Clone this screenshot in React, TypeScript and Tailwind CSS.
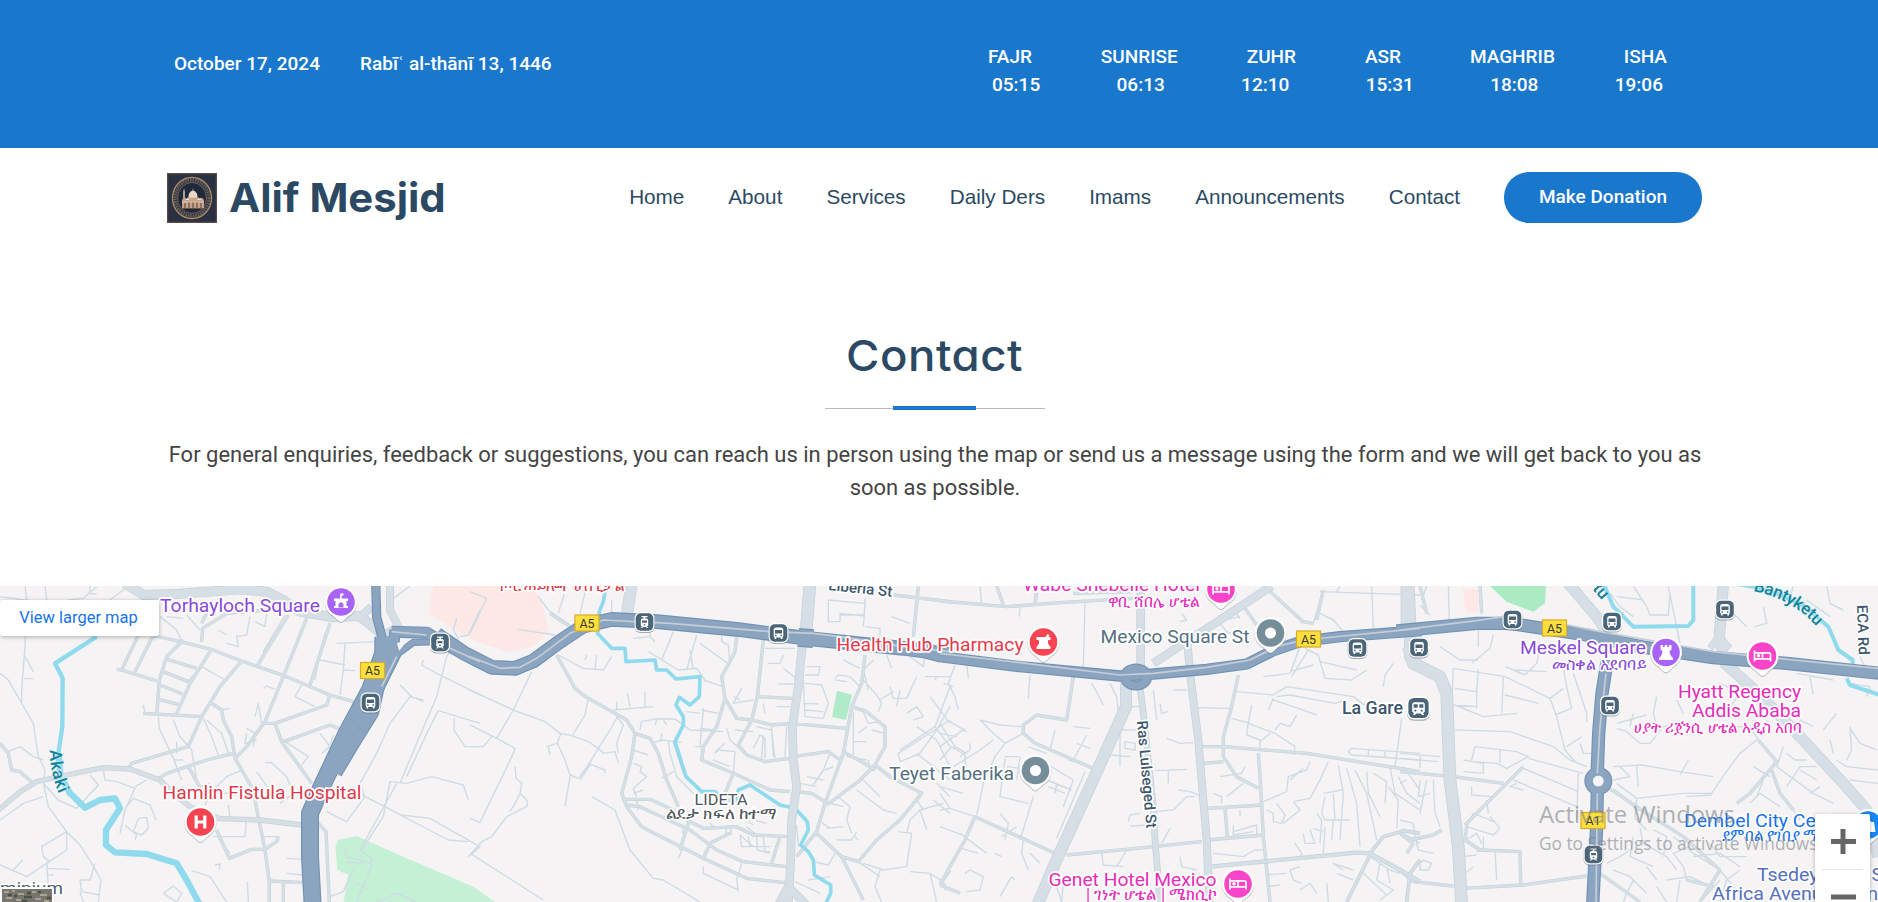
import React from "react";

const labels = ["FAJR", "SUNRISE", "ZUHR", "ASR", "MAGHRIB", "ISHA"];
const times = ["05:15", "06:13", "12:10", "15:31", "18:08", "19:06"];
const links = ["Home", "About", "Services", "Daily Ders", "Imams", "Announcements", "Contact"];

/* The map is split in four tiles, each drawn in units of a third of a pixel. */
type Tile = {
  x: number;
  minor: string;
  medium: string;
  major: [string, number][];
  river: [string, number][];
  highway: [string, number][];
  median: string;
};

const tiles: Tile[] = [
  {
    x: 0,
    minor:
      "M0,50 L110,65 L190,75 M75,18 L80,60 L75,200 L65,330 L65,370 M75,230 L100,275 M72,296 L100,296 M0,280 L25,300 L65,370 L100,430 L115,530 L135,570 L130,610 L145,680 L200,755 L240,795 L275,850 L303,900 L295,966 M130,610 L175,660 L230,685 L295,615 L270,585 M135,18 L140,60 M205,60 L250,55 L290,20 M330,60 L385,18 M270,18 L270,40 L290,42 M310,570 L315,600 L350,605 L405,625 L375,690 L360,760 M380,680 L400,655 L450,675 L468,720 M405,620 L440,600 M415,715 L440,712 L445,745 L425,765 L400,755 L415,715 M375,735 L410,765 L405,780 M25,515 L60,500 L100,530 L130,540 M0,720 L70,670 L130,650 M200,755 L125,800 L130,830 L150,845 M0,855 L80,890 L140,850 L200,810 L200,755 M140,845 L145,925 M140,865 L210,868 M145,885 L160,885 M40,870 L68,840 M240,900 L270,900 L285,850 M240,900 L245,935 L300,945 M240,935 L250,966 M475,410 L478,445 L520,535 L545,600 M520,420 L540,470 L575,510 L590,600 M610,415 L635,470 L655,525 M620,420 L665,460 L685,520 M530,485 L530,520 M520,540 L550,540 M430,375 L435,400 M605,260 L675,300 M605,258 L560,310 M665,390 L690,385 M740,445 L765,460 L760,500 M740,460 L735,490 L770,480 M765,410 L775,370 L785,430 M790,325 L800,318 L825,328 M885,350 L945,380 M905,315 L885,350 M840,475 L925,530 L905,555 M795,548 L815,548 L860,590 L880,640 L840,670 M770,575 L805,625 M615,675 L635,635 L680,590 L725,570 M600,620 L630,610 M640,640 L740,640 M685,675 L690,710 M640,770 L735,770 L740,715 M655,775 L690,820 M645,855 L660,852 L658,870 M790,770 L835,770 M860,835 L910,838 M860,880 L910,885 M742,905 L745,966 M575,872 L630,890 L680,966 M490,940 L520,918 L545,940 L530,966 L490,940 M810,190 L780,240 M855,105 L790,215 M710,165 L715,200 L680,190 M750,110 L740,165 L710,170 M765,125 L795,140 L800,100 M480,110 L530,150 L545,185 M560,105 L600,150 M500,110 L550,115 M655,150 L680,165 M960,240 L1035,255 M1035,190 L1030,270 L1020,345 M1030,270 L1065,272 M975,160 L955,240 L945,300 M1010,190 L1130,185 M960,460 L990,500 L965,520 M990,495 L1000,465 M1160,70 L1230,18 M1200,315 L1235,350 L1270,365 M1270,360 L1230,350 L1170,430 L1130,520 L1080,610 L1095,650 L1040,725 L980,695 M1340,230 L1310,350 L1250,490 L1200,610 M1270,240 L1265,255 L1310,280 L1440,345 M1340,230 L1375,175 L1360,150 L1370,115 M1380,170 L1405,165 L1440,90 M1315,392 L1290,440 L1220,590 M1315,392 L1440,430 M1363,415 L1362,450 L1395,500 L1440,500 M1170,605 L1220,610 L1295,590 L1390,615 L1405,660 M1190,610 L1080,810 M1085,645 L1165,685 L1230,720 L1345,780 L1405,785 M1205,705 L1290,715 L1440,800 L1405,830 M1170,605 L1150,710 L1085,810 M1035,805 L1040,830 L1115,850 M1080,810 L1115,835 L1115,855 L1070,966 M1035,848 L1090,848 M990,950 L1030,935 L1045,900 L1060,870 M1060,905 L1100,925 M1130,966 L1190,940 L1250,966",
    medium:
      "M455,165 L540,185 L630,207 L725,243 L860,290 L990,345 L1060,365 M865,105 L770,260 M990,130 L930,315 M920,115 L850,290 L795,425 L740,500 L708,532 M550,180 L500,230 L478,300 L470,405 M415,165 L365,270 L470,303 M460,165 L405,275 M350,268 L365,270 M498,237 L590,265 M490,275 L565,305 M480,315 L548,342 M476,358 L535,373 M635,207 L570,310 L530,400 M725,243 L660,320 L605,410 L565,500 L395,550 L385,565 M430,400 L605,410 M635,370 L665,390 L670,420 L695,470 L705,535 L760,630 L775,715 L785,760 L795,810 L808,905 L808,966 M470,600 L500,580 L620,540 L700,520 M790,430 L825,430 L980,375 L990,345 M825,430 L845,485 L935,610 M845,487 L990,435 L1015,445 M565,560 L610,640 M650,750 L688,835 L755,808 L795,808 L830,785 L835,768 M808,903 L912,908 M850,903 L850,966 M605,185 L608,145 L680,100 L800,90 M0,490 L25,520 L35,570 L60,575 L95,605 M955,730 L978,755 L988,966 M620,100 L605,130",
    major: [
      ["M375,10 L430,45 L530,42 L720,28 L800,35 L850,60 L900,95 L1000,112 L1080,108 L1150,165", 30],
      ["M1170,10 L1170,90 L1195,140 L1150,165 M1115,80 L1070,120", 24],
      ["M-10,695 L60,635 L110,605 L200,585 L310,563 L390,567 L480,600 L520,640 L570,680 L660,716 L780,720 L905,735", 16],
    ],
    river: [
      ["M290,170 L165,250 L188,295 L187,440 L175,520", 13],
      ["M175,520 L182,590 L210,640 L255,683 L300,660 L345,655 L360,685 L318,750 L318,795 L345,817 L440,822 L530,850 L560,900 L600,975", 19],
    ],
    highway: [
      ["M1127,0 L1130,110 L1148,180", 28],
      ["M1150,170 L1150,220 L1110,330 L1040,460 L965,620 L930,700 L930,830 L938,976", 54],
      ["M1185,150 L1180,215 L1140,310 L1120,400 L1070,480 L1010,580", 34],
      ["M1175,155 L1280,158 L1350,200 L1445,250", 36],
      ["M1080,440 L1140,330 L1195,220 L1240,187 L1310,185", 22],
    ],
    median: "M1350,205 L1440,245 M1175,155 L1280,165 M1145,320 L1190,230",
  },
  {
    x: 470,
    minor:
      "M0,35 L50,55 L0,160 M290,18 L265,100 M350,18 L330,100 M425,60 L425,100 M205,50 L235,90 L300,135 M145,148 L255,165 M265,225 L340,265 L400,270 L425,230 M380,225 L375,268 M350,225 L345,240 M185,275 L130,390 L80,475 M0,330 L130,390 L225,425 L270,460 L305,467 L355,485 L385,505 M0,435 L80,475 L135,505 L130,520 L30,728 L0,715 M0,500 L40,500 L65,470 M135,560 L138,595 L155,610 L150,640 L170,660 L172,678 L140,695 L110,710 L65,770 L35,785 L0,825 M150,640 L130,680 L118,695 M355,355 L345,405 L308,465 M445,405 L420,450 L385,505 L355,555 L325,595 L300,585 L285,540 L262,490 L272,462 M300,590 L285,680 M230,500 L262,490 M235,500 L240,525 M355,550 L405,570 L405,580 M385,505 L400,520 L435,515 L445,550 M440,410 L460,435 L440,490 L445,520 M0,820 L220,960 M365,650 L435,690 L480,810 L550,895 L580,900 L690,966 M430,390 L550,380 M525,335 L525,380 M472,340 L480,380 M440,365 L440,390 M510,450 L515,425 L555,417 L615,417 L660,450 L760,455 M560,420 L555,435 M580,420 L590,435 M545,490 L575,480 L635,487 M595,485 L600,520 L620,590 L680,650 M610,487 L640,580 M575,460 L573,485 M490,510 L535,525 M490,550 L515,560 L510,575 L530,590 L490,625 L500,650 M575,595 L610,575 M680,165 L650,270 M610,155 L575,240 M535,215 L625,270 L680,265 L705,300 M670,270 L660,210 M755,170 L755,185 L775,195 L780,250 M690,190 L780,255 M695,390 L745,400 M700,385 L690,500 M690,445 L735,450 M650,395 L690,400 M675,500 L700,500 M700,300 L760,320 M815,325 L790,370 L850,360 M790,350 L810,360 M885,205 L975,205 M895,250 L930,250 L940,225 M925,312 L970,312 M940,265 L985,300 M920,380 L960,380 M860,440 L905,450 L915,540 M905,440 L910,530 M880,465 L875,535 M850,505 L870,465 L885,475 L885,535 M950,440 L945,530 M795,450 L850,455 M770,445 L780,480 L835,530 M735,520 L745,510 L795,515 M795,515 L790,580 M730,540 L780,560 M765,490 L735,515 M880,370 L885,400 M1010,260 L1050,260 L1045,285 L1005,285 M1005,310 L1055,315 L1075,370 L1060,415 L1005,410 M1005,370 L1045,372 M1005,390 L1060,395 M1000,300 L1005,410 M1095,295 L1105,285 L1140,290 L1170,320 M1095,300 L1130,305 M1120,240 L1170,265 M1075,60 L1185,70 L1180,140 M1075,60 L1075,125 L1110,125 L1110,100 L1185,108 M1110,105 L1185,105 M1185,55 L1185,85 M1230,180 L1230,145 L1185,140 M1265,110 L1320,130 M1180,300 L1220,345 L1235,370 L1225,395 M1195,330 L1180,270 L1210,240 M1260,320 L1270,355 L1310,355 L1340,290 M1250,225 L1265,265 M1320,230 L1360,260 L1365,215 M1365,290 L1440,290 M1400,290 L1395,300 M1270,335 L1230,360 M1290,330 L1280,380 M1310,400 L1340,380 L1360,410 L1330,420 M1440,380 L1400,450 L1350,520 L1290,545 M1380,350 L1440,430 M1440,320 L1395,440 L1440,500 M1340,440 L1400,480 M1290,510 L1350,470 L1395,440 M1290,545 L1285,520 L1440,420 M1340,520 L1440,600 M1400,480 L1440,560 M1150,395 L1150,525 M1150,485 L1190,485 M1180,395 L1195,430 L1230,425 M1245,460 L1205,450 M1165,460 L1190,440 M1195,540 L1200,570 L1165,610 M1130,530 L1190,540 M1065,570 L1090,560 M1010,590 L1060,600 M1030,615 L1060,570 L1080,520 M990,610 L1040,620 M1105,650 L1140,680 L1130,720 L1145,760 M1080,670 L1120,680 M1160,630 L1200,660 L1240,690 L1280,700 M1180,600 L1230,650 M1100,780 L1145,780 L1160,755 M1155,770 L1165,780 M1045,720 L1080,745 M1070,745 L1120,740 M1030,845 L1075,855 L1095,820 M1015,900 L1080,890 M1180,850 L1240,870 L1310,860 L1325,760 L1285,755 M1230,870 L1215,920 L1235,966 M1150,835 L1230,890 M1310,760 L1320,720 L1350,690 L1420,670 M1350,690 L1370,750 M1360,690 L1340,660 M1390,660 L1440,700 M1400,610 L1440,650 M1320,875 L1380,880 L1420,905 M1380,880 L1400,966 M970,940 L1005,966 M975,905 L1050,940 M810,765 L850,800 L870,800 L900,800 M810,765 L815,800 L850,798 M830,740 L860,765 M850,735 L835,725 M835,770 L840,800 L830,800 M860,770 L862,810 L900,820 M880,770 L885,815 L900,815 M780,740 L785,765 M700,860 L700,880 L805,930 M815,850 L800,900 L805,935 M640,800 L625,835 M720,730 L735,745 M770,745 L765,770 M980,735 L985,800 M850,720 L890,730 M540,150 L540,170 L490,175 M540,170 L555,185 M330,600 L360,555 M490,640 L520,630 M500,660 L505,690",
    medium:
      "M240,100 L300,140 M260,225 L315,325 L350,352 L470,420 L495,460 L485,530 L455,640 L470,680 L515,740 L700,835 L830,895 L945,908 M495,460 L540,475 L565,520 L590,600 L625,680 M460,658 L540,658 L610,690 L650,720 L700,745 L800,740 L850,765 L955,770 M470,675 L510,680 L660,750 L740,810 L820,845 L950,860 M650,745 L630,810 M660,725 L640,760 M700,835 L720,790 L780,760 M930,770 L905,850 M800,170 L795,215 L755,290 L765,355 L740,440 L700,500 L695,540 L790,580 L900,630 L960,635 M765,355 L800,415 L845,420 L905,435 L975,430 M880,180 L862,350 L845,420 L805,495 L830,525 L885,545 L960,535 M862,350 L965,355 M790,580 L765,640 M965,430 L1130,445 M970,530 L1075,515 L1110,540 M980,635 L1025,640 L1065,665 M1185,225 L1175,310 L1145,380 L1120,520 L1065,670 L1040,755 L980,830 M1145,380 L1190,395 L1245,440 L1245,500 L1215,555 L1165,605 L1070,675 M1120,515 L1175,545 L1215,570 M1215,555 L1260,590 L1355,640 L1290,720 L1220,780 L1165,845 L1115,830 L1040,760 M1115,830 L1180,960 M1345,20 L1330,170 M1270,45 L1440,65 M1415,905 L1440,870 M1415,905 L1430,930",
    major: [
      ["M485,10 L470,110", 36],
      ["M1020,10 L1008,160", 38],
      ["M1000,160 L985,320 L967,440 L970,540 L980,620 L965,720 L962,840 L955,975", 26],
      ["M955,920 L925,976 M955,920 L1010,976", 26],
    ],
    river: [
      ["M410,10 L400,65 L388,95 L382,160 L425,205 L465,205 L468,245 L555,240 L560,270 L590,270 L618,297 L690,290 L688,350 L660,375 L628,352 L618,375 L640,410 L640,435 L615,485 L648,590 L695,635 L735,635 L760,660 L800,660 L805,630 L840,615 L930,675 L975,685 L1012,725 L1015,750 L992,795 L1015,815 L1030,840 L1033,885 L1082,915 L1082,940 L1065,975", 11],
    ],
    highway: [["M-100,163 L-20,218 L65,262 L135,265 L190,243 L265,188 L340,138 L425,118 L560,125 L800,148 L1010,175 L1300,205 L1450,225", 44], ["M985,172 L1030,176", 56]],
    median: "M0,230 L90,265 L150,262 L200,235 L300,160 L400,120 L600,130 L900,155 L1030,160 L1110,170 L1300,200 L1440,215",
  },
  {
    x: 940,
    minor:
      "M120,18 L125,75 M240,85 L238,110 M435,70 L430,260 M510,310 L530,350 L535,400 M455,310 L475,345 L490,375 M270,285 L265,355 M80,250 L85,295 M45,255 L25,310 L45,350 L55,390 M10,310 L40,320 M0,430 L45,500 L80,520 M0,500 L75,445 M30,425 L80,455 M0,460 L50,470 M0,540 L35,500 L75,525 L80,600 M40,560 L120,510 L160,480 M60,530 L90,510 L90,490 M120,420 L180,435 L245,440 M120,420 L160,460 L195,490 L250,460 M195,490 L165,530 L130,610 L110,705 M195,530 L235,530 M345,450 L330,510 M440,465 L400,540 M410,490 L450,505 M195,535 L180,650 L265,670 M200,560 L240,565 M240,530 L230,600 M280,650 L240,780 M265,500 L320,520 M310,545 L400,600 M320,600 L395,630 M325,620 L375,640 M350,610 L345,640 M435,575 L350,775 M400,600 L370,680 M0,620 L70,640 M0,690 L30,685 L105,710 M30,685 L0,640 M60,760 L140,820 M0,740 L80,770 M65,805 L115,820 M180,700 L205,730 L195,780 M185,770 L230,740 M250,780 L245,820 L265,870 M165,820 L185,830 M75,880 L90,870 L130,890 L120,930 L80,935 M180,950 L215,890 L225,900 M270,820 L300,850 M545,450 L590,450 M540,450 L540,560 M555,485 L585,490 L585,510 L555,505 L555,485 M510,525 L570,530 M575,380 L610,380 M660,370 L665,400 L685,395 M640,330 L650,420 M700,330 L740,330 M645,572 L740,568 M685,570 L685,610 M680,475 L720,490 L760,488 M770,383 L870,385 M640,695 L700,690 L740,650 L765,650 M565,725 L570,705 L600,700 M570,738 L625,735 M715,630 L750,635 L790,650 M690,745 L665,790 M485,820 L490,855 L550,860 M530,860 L560,810 M720,830 L725,860 L770,870 M400,440 L450,445 M385,540 L435,550 M880,90 L900,115 M830,125 L900,110 M725,100 L740,120 L720,125 M840,130 L860,155 L880,165 M1095,205 L1135,225 L1155,295 L1235,300 L1280,270 M1140,245 L1250,270 M1080,200 L1050,280 L970,290 M1105,210 L1055,290 M1120,255 L1050,275 M985,30 L1090,130 M1150,30 L1120,130 M1140,35 L1440,45 M1295,18 L1300,145 M1140,100 L1180,120 L1210,155 M1200,18 L1190,35 M890,335 L1000,345 L1040,320 L1240,350 L1280,380 M1010,350 L1050,345 L1185,370 L1215,360 M1000,360 L1060,380 L1130,405 M1000,355 L985,390 M935,375 L925,430 L1005,460 L1065,500 M925,425 L920,465 L960,480 L960,510 M875,415 L930,430 M1005,450 L1020,430 L1050,440 L1070,405 M1065,500 L1062,525 M960,485 L990,460 M1385,415 L1365,560 M1225,515 L1235,505 L1440,520 M1225,515 L1235,525 L1440,540 M1285,510 L1285,525 M1335,515 L1335,530 M840,590 L905,580 L915,560 M860,650 L910,610 M1110,545 L1100,570 L1045,590 L1040,635 L970,665 M1090,565 L1050,600 M1165,545 L1140,600 L1110,655 L1060,665 M1195,555 L1210,640 L1200,780 M1220,565 L1250,670 L1260,800 M1245,570 L1280,640 L1310,780 M1280,575 L1285,640 L1320,710 M1300,580 L1340,605 L1335,670 M1150,640 L1205,630 M1155,650 L1145,700 L1155,720 L1230,720 M1180,640 L1185,720 M980,690 L1000,700 L1000,725 L1025,730 L1035,705 L1010,670 M1060,665 L1080,690 L1030,730 M880,735 L880,765 L940,755 M880,755 L950,735 L950,765 M900,690 L900,710 M820,820 L910,830 L945,810 L975,810 M1065,790 L1085,820 L1080,835 M1090,760 L1095,790 L1125,790 L1110,750 M1120,745 L1150,755 M1130,700 L1145,720 L1140,790 M1155,740 L1150,820 M1345,620 L1375,660 L1370,745 M1375,590 L1400,640 L1440,670 M1350,560 L1365,640 L1440,690 M1180,720 L1175,780 M1240,870 L1180,850 L1210,870 M1190,880 L1240,900 M1160,910 L1165,966 M1080,930 L1110,910 L1130,940 M1080,860 L1050,870 L1060,900 L1085,910 M975,885 L1040,880 M980,920 L1020,915 M1290,830 L1350,870 L1380,880 M1320,850 L1310,900 L1360,930 L1320,960 M1340,860 L1350,910 M1270,880 L1340,945 M1390,760 L1440,790 M1390,560 L1440,630 M820,640 L845,650 L845,670 M345,905 L365,966 M370,900 L365,966 M1330,320 L1335,285 L1360,250",
    medium:
      "M0,63 L200,80 L360,68 L580,55 M170,18 L190,75 M290,40 L285,75 M400,290 L380,420 L290,405 L250,435 L250,460 L285,490 L455,563 M0,915 L35,850 L75,780 L105,710 L345,820 M0,915 L60,940 M380,825 L560,808 L785,785 M895,285 L875,380 L850,470 L850,530 L890,590 L955,625 M785,500 L850,500 L1100,520 L1440,575 M790,550 L850,545 M955,520 L962,620 L970,770 L990,966 M800,685 L970,675 M805,780 L970,765 M855,685 L862,770 M915,85 L950,135 M985,30 L1090,125 L1120,130 M1150,30 L1130,120 M580,35 L400,40 M290,18 L285,70",
    major: [
      ["M602,20 L602,260", 26],
      ["M995,18 L840,120 L640,250", 26],
      ["M740,160 L750,280 L775,480 L800,780 L808,966", 24],
      ["M600,320 L610,400 L640,680 L645,780 L660,966", 20],
      ["M558,310 L558,380 L450,620 L345,850 L290,980", 36],
      ["M1400,18 L1400,135 M1410,170 L1410,230 L1440,260", 36],
      ["M810,860 L1250,818 L1290,820 L1380,870 L1440,905", 13],
      ["M1290,820 L1330,770 L1390,752 L1440,760 M1290,825 L1220,966 M1440,840 L1410,880 L1400,966", 11],
    ],
    river: [],
    highway: [["M-40,220 L0,230 L240,260 L540,288 L640,282 L800,268 L920,252 L1000,212 L1080,185 L1200,170 L1445,152", 34], ["M554,291 A34,26 0 1 0 622,291 A34,26 0 1 0 554,291", 29]],
    median: "M0,220 L200,243 L540,285 L640,280 L800,262 L930,240 L1010,200 L1090,180 L1440,145",
  },
  {
    x: 1400,
    minor:
      "M145,18 L148,125 M65,60 L80,18 M60,75 L90,105 M235,150 L235,200 M215,250 L270,205 L280,165 M120,200 L180,240 L235,240 M160,265 L315,290 L450,355 L490,325 M160,265 L155,375 L230,380 M165,325 L230,335 L235,270 M230,335 L230,385 M310,290 L305,400 M315,260 L375,285 L410,250 L420,200 M345,270 L440,275 M315,345 L415,370 M450,355 L470,410 L495,510 L530,550 M490,265 L500,320 L515,385 L465,405 M520,280 L560,400 L560,425 M165,450 L330,455 L460,500 L510,540 L560,560 M165,375 L250,410 L350,400 M0,520 L120,530 M0,535 L115,545 M60,525 L60,565 M190,540 L250,550 L250,580 L190,575 M225,500 L350,515 L385,530 L320,565 L290,550 L220,545 M225,500 L215,540 M300,510 L300,550 M385,535 L550,580 M370,565 L535,635 M340,600 L530,680 M350,610 L330,620 L370,630 M535,580 L530,720 M215,620 L215,645 L280,650 M260,660 L265,700 M200,740 L220,700 L280,725 M200,740 L280,765 L300,745 L270,710 M540,490 L550,520 L575,520 M500,500 L545,470 M190,785 L230,760 L245,790 M185,830 L230,825 M190,885 L220,860 M230,815 L250,810 L250,770 M285,810 L290,900 M620,850 L660,830 L690,810 M60,850 L70,840 L95,850 L85,870 L60,870 L60,850 M45,770 L55,810 L100,820 M0,720 L40,730 L45,770 M0,610 L20,600 M60,600 L55,650 L90,640 M80,600 L60,700 M100,600 L105,700 L120,740 M630,40 L660,80 L700,110 M700,18 L740,80 L750,105 L805,105 L810,40 M650,50 L730,60 M805,20 L840,190 M650,430 L740,405 M650,445 L680,455 L720,490 L750,490 L790,440 L860,430 M770,350 L760,400 L770,440 M700,400 L690,440 M830,360 L850,400 M640,560 L725,555 L840,575 L940,590 M840,585 L865,540 M710,560 L715,620 M660,560 L690,590 L640,600 M650,610 L710,655 L850,640 L935,640 M710,655 L705,715 L740,750 M860,650 L935,645 M935,640 L975,580 L1020,520 L1070,480 M1130,560 L1240,640 L1300,670 M1010,440 L1050,440 L1075,480 M960,310 L1030,345 L1040,310 M970,405 L1030,330 M1185,480 L1200,420 L1240,440 M1350,440 L1355,510 L1340,540 M1350,445 L1380,490 L1430,510 M1270,450 L1310,400 M1230,290 L1240,345 M1350,310 L1410,320 L1400,350 M1380,230 L1395,260 M1090,80 L1100,130 L1065,140 M1000,100 L1040,140 M1180,18 L1170,50 M1280,18 L1290,70 L1330,90 M1220,60 L1290,110 M1190,280 L1300,300 M1250,560 L1200,560 L1160,620 M1130,560 L1150,500 M1200,570 L1250,600 M1160,520 L1185,540 L1220,540 M1230,640 L1260,620 M1310,540 L1340,560 L1434,570 M1350,600 L1434,610 M1290,480 L1300,520 M860,900 L850,860 L820,820 L870,800 M700,770 L690,830 L760,860 M720,745 L730,790 L800,830 L830,870 M760,750 L800,770 L790,830 M820,770 L880,820 L960,870 L1000,920 L1040,966 M640,870 L690,890 L740,940 M700,900 L680,940 L670,966 M740,860 L770,900 M800,900 L870,890 L930,920 M770,920 L800,966 M840,900 L830,966 M880,830 L960,820 L1020,860 M930,790 L960,830 L1040,830 M960,900 L900,966 M1020,870 L980,900 L960,966 M1050,670 L1080,640 L1140,680 M1090,600 L1070,650 M1110,700 L1150,720 M1160,660 L1200,720 M1110,590 L1060,560",
    medium:
      "M0,575 L160,590 L310,610 M370,560 L195,735 M0,760 L40,790 M0,870 L40,905 L160,918 M190,925 L370,915 L560,888 M40,790 L20,820 M0,755 L30,780 L100,765 L125,750 M200,740 L195,780 L240,810 L360,815 L362,910 M620,620 L740,700 L850,770 L960,870 M640,630 L720,690 M600,880 L670,930 L720,966 M960,870 L900,966 M860,900 L940,920 M1075,480 L1130,545 L1050,640 L1010,670 M1115,570 L1140,640 L1180,690 M240,18 L245,100 M60,18 L80,100",
    major: [
      ["M25,18 L30,135 M25,200 L40,250 L120,290 L140,340 L150,600 L175,800 L185,976", 38],
      ["M505,10 L590,110 L625,160", 34],
      ["M970,10 L958,170 L975,250 L1080,345 L1200,470 L1330,610 L1400,690 L1434,830", 34],
      ["M955,170 L930,205 M955,170 L990,205", 20],
    ],
    river: [
      ["M610,10 L640,80 L700,140 L865,138 L880,120 L880,10", 12],
      ["M1000,10 L1060,20 L1130,40 L1215,80 L1285,140 L1315,210 L1358,240 L1358,255 M1340,295 L1350,315 L1440,345", 12],
    ],
    highway: [["M-10,153 L0,152 L230,130 L330,130 L560,165 L740,203 L940,233 L1160,250 L1440,280", 40], ["M622,240 L606,340 L596,460 L592,570 M592,630 L590,740 L578,976", 40], ["M567,603 A28,28 0 1 0 623,603 A28,28 0 1 0 567,603", 28]],
    median: "M0,150 L230,122 L310,110 M430,120 L600,155 L800,190 L940,215 L1180,240 L1434,265 M618,280 L600,440 L592,580 M592,640 L588,966",
  },
];

const Layer = ({ children }: { children: (t: Tile) => React.ReactNode }) => (
  <>
    {tiles.map((t) => (
      <g key={t.x} transform={`translate(${t.x} 580) scale(0.33333)`}>
        {children(t)}
      </g>
    ))}
  </>
);

type LabelProps = { x: number; y: number; w: number; s?: number; c: string; t: string; bold?: boolean; rot?: number };
const Label = ({ x, y, w, s = 19, c, t, bold, rot }: LabelProps) => (
  <text
    x={x}
    y={y}
    fontSize={s}
    textLength={w}
    lengthAdjust="spacingAndGlyphs"
    fill={c}
    stroke="#ffffff"
    strokeWidth={3.4}
    strokeLinejoin="round"
    paintOrder="stroke"
    fontWeight={bold ? 500 : 400}
    transform={rot ? `rotate(${rot} ${x} ${y})` : undefined}
  >
    {t}
  </text>
);

const Pin = ({ x, y, c, children }: { x: number; y: number; c: string; children?: React.ReactNode }) => (
  <g transform={`translate(${x} ${y})`}>
    <path d="M0,20 C-3,20 -4,16 -10,12.500 A16,16 0 1 1 10,12.500 C4,16 3,20 0,20Z" transform="translate(0 1)" fill="#64707a" opacity=".45" />
    <path d="M0,20 C-3,20 -4,16 -10,12.500 A16,16 0 1 1 10,12.500 C4,16 3,20 0,20Z" fill="#fff" />
    <circle r="13.800" fill={c} />
    {children}
  </g>
);

const Bed = () => (
  <g>
    <path d="M-8,-5.500 V5.500 M-8,2.800 H8 M8,5.500 V-1.500 Q8,-3.200 6.300,-3.200 H0 V2.800 M-8,-3.200 H0" fill="none" stroke="#fff" strokeWidth="1.700" />
    <circle cx="-4" cy="-.2" r="1.700" fill="#fff" />
  </g>
);

const Transit = ({ x, y, tram, wide }: { x: number; y: number; tram?: boolean; wide?: boolean }) => (
  <g transform={`translate(${x} ${y})`}>
    <rect x="-10" y="-9.500" width="20" height="20.500" rx="6" fill="#56646f" opacity=".5" />
    <rect x="-10" y="-10" width="20" height="20" rx="6" fill="#fff" />
    <rect x="-8.800" y="-8.800" width="17.600" height="17.600" rx="5" fill="#4a6478" />
    {tram ? (
      <path fillRule="evenodd" d="M-3,-6 H3 V-4.700 H.8 V-3.400 H2 Q3.700,-3.400 3.700,-1.800 V3.500 L2.500,4.500 L4,6 H2.500 L1.500,5 H-1.500 L-2.500,6 H-4 L-2.500,4.500 L-3.700,3.500 V-1.800 Q-3.700,-3.400 -2,-3.400 H-.8 V-4.700 H-3Z M-2.400,-1.500 V.8 H2.400 V-1.500Z M-.8,2.200 h1.600 v1.400 h-1.600z" fill="#fff" />
    ) : (
      <path fillRule="evenodd" d={wide ? "M-5.500,-3 Q-5.500,-5 -3.500,-5 H3.500 Q5.500,-5 5.500,-3 V3 L4,4.500 L5,6 H3 L2,4.800 H-2 L-3,6 H-5 L-4,4.500 L-5.500,3Z M-4.200,-3.300 V-.3 H-.7 V-3.300Z M.7,-3.300 V-.3 H4.200 V-3.300Z M-3.600,1.600 h1.700 v1.500 h-1.700z M1.900,1.600 h1.700 v1.500 h-1.700z" : "M-4.800,-3.500 Q-4.800,-5.500 -2.500,-5.500 H2.500 Q4.800,-5.500 4.800,-3.500 V3.500 L4,4.500 V6 H2.300 V4.500 H-2.300 V6 H-4 V4.500 L-4.800,3.500Z M-3.500,-3 V.4 H3.500 V-3Z M-3.400,1.800 h1.500 v1.400 h-1.500z M1.900,1.800 h1.500 v1.400 h-1.500z"} fill="#fff" />
    )}
  </g>
);

const Shield = ({ x, y, t }: { x: number; y: number; t: string }) => (
  <g>
    <rect x={x - 12} y={y - 8} width="24" height="16" fill="#ffdf3c" stroke="#d9ab2b" strokeWidth="1.200" />
    <text x={x} y={y + 4.500} fontSize="12.800" fontWeight="400" textAnchor="middle" fill="#33373a" textLength="15" lengthAdjust="spacingAndGlyphs">{t}</text>
  </g>
);

const CityMap = () => (
  <svg viewBox="0 586 1878 316" className="block h-[316px] w-full bg-[#f5f3f4] font-['Roboto','Noto_Sans',sans-serif]">
    <g transform="translate(0 580) scale(.33333)">
      <path d="M1300,18 L1285,100 L1350,140 L1440,190 L1530,216 L1600,200 L1645,155 L1630,80 L1600,18Z" fill="#fde8e6" />
      <path d="M1015,780 L1070,768 L1220,835 L1420,920 L1490,970 L1030,970 L1045,885 L1012,870 L1006,800Z" fill="#c4f0d6" />
      <path d="M2511,332 L2556,344 L2538,420 L2496,411Z" fill="#aeebc6" />
      <path d="M4470,18 L4520,65 L4600,95 L4635,70 L4638,18Z" fill="#aaebc3" />
      <path d="M4388,25 L4435,30 L4435,95 L4398,95Z" fill="#fde8e6" />
    </g>
    <Layer>{(t) => <path d={t.minor} fill="none" stroke="#cfdbe4" strokeWidth="4.200" strokeLinejoin="round" />}</Layer>
    <Layer>{(t) => <path d={t.medium} fill="none" stroke="#c3cfd7" strokeWidth="10" strokeLinejoin="round" />}</Layer>
    <Layer>{(t) => <path d={t.medium} fill="none" stroke="#d5dfe6" strokeWidth="7.500" strokeLinejoin="round" />}</Layer>
    <Layer>{(t) => t.river.map(([d, w]) => <path key={d} d={d} fill="none" stroke="#8fdaed" strokeWidth={w} strokeLinejoin="round" />)}</Layer>
    <Layer>{(t) => t.major.map(([d, w]) => <path key={d} d={d} fill="none" stroke="#c5d0d8" strokeWidth={w} strokeLinejoin="round" />)}</Layer>
    <Layer>{(t) => t.major.map(([d, w]) => <path key={d} d={d} fill="none" stroke="#d6dfe6" strokeWidth={w - 4} strokeLinejoin="round" />)}</Layer>
    <Layer>{(t) => t.highway.map(([d, w]) => <path key={d} d={d} fill="none" stroke="#7292b4" strokeWidth={w} strokeLinejoin="round" />)}</Layer>
    <Layer>{(t) => t.highway.map(([d, w]) => <path key={d} d={d} fill="none" stroke="#8ba5c1" strokeWidth={w - 7} strokeLinejoin="round" />)}</Layer>
    <Layer>{(t) => <path d={t.median} fill="none" stroke="#c6cdd7" strokeWidth="5" strokeLinejoin="round" />}</Layer>
    <path d="M397,643 L408,640 L399,651Z" fill="#f5f3f4" />
    <circle cx="1598.300" cy="781" r="5.500" fill="#f5f3f4" />

    <Shield x={372.500} y={670.500} t="A5" />
    <Shield x={587} y={623} t="A5" />
    <Shield x={1308.500} y={639} t="A5" />
    <Shield x={1554.500} y={628} t="A5" />
    <Shield x={1593} y={820.500} t="A1" />

    <Transit x={440} y={642.500} tram />
    <Transit x={370.500} y={702.500} />
    <Transit x={644.500} y={622} tram />
    <Transit x={778.500} y={633} />
    <Transit x={1357.500} y={648} />
    <Transit x={1419} y={647.500} />
    <Transit x={1512.500} y={619.500} />
    <Transit x={1612} y={621.500} />
    <Transit x={1725} y={609.500} />
    <Transit x={1610} y={705.500} />
    <Transit x={1593.500} y={854.500} tram />
    <g transform="translate(1418.500 708) scale(1.150)"><Transit x={0} y={0} wide /></g>

    <Label x={160} y={611.500} w={160} c="#8a49d8" t="Torhayloch Square" />
    <Label x={162.500} y={798.500} w={199} c="#dc3a4a" t="Hamlin Fistula Hospital" />
    <Label x={500} y={591} w={125} s={17} c="#dc3a4a" t="ጦር ሐይሎች ሆስፒታል" />
    <Label x={828} y={590} w={64} s={15} c="#3f586d" t="Liberia St" bold rot={6} />
    <Label x={836.500} y={651} w={187} c="#e63a4b" t="Health Hub Pharmacy" />
    <Label x={1023} y={591} w={177} c="#e62bb9" t="Wabe Shebelle Hotel" />
    <Label x={1108} y={606.500} w={92} s={17} c="#e62bb9" t="ዋቢ ሸበሌ ሆቴል" />
    <Label x={1100.500} y={642.500} w={149} c="#55707f" t="Mexico Square St" />
    <Label x={889} y={780} w={125} c="#55707f" t="Teyet Faberika" />
    <Label x={1342} y={713.500} w={61} s={17.500} c="#3d566b" t="La Gare" bold />
    <Label x={694.500} y={805} w={53} s={14} c="#50565c" t="LIDETA" />
    <Label x={665.500} y={818.500} w={111} s={16} c="#50565c" t="ልደታ ክፍለ ከተማ" bold />
    <Label x={1137} y={721} w={108} s={15} c="#3f586d" t="Ras Lulseged St" bold rot={85} />
    <Label x={1048.500} y={885.500} w={168} c="#e62bb9" t="Genet Hotel Mexico" />
    <Label x={1086} y={900} w={131} s={17} c="#e62bb9" t="| ገነት ሆቴል | ሜክሲኮ" />
    <Label x={1520} y={654} w={126} c="#8a49d8" t="Meskel Square" />
    <Label x={1552} y={669.500} w={94} s={17} c="#8a49d8" t="መስቀል አደባባይ" />
    <Label x={1678} y={698} w={123} c="#e62bb9" t="Hyatt Regency" />
    <Label x={1692} y={717} w={109} c="#e62bb9" t="Addis Ababa" />
    <Label x={1634} y={732.500} w={168} s={17} c="#e62bb9" t="ሀያት ሪጀንሲ ሆቴል አዲስ አበባ" />
    <Label x={1684} y={826.500} w={149} c="#1a73e8" t="Dembel City Cent" />
    <Label x={1722} y={841} w={121} s={17} c="#1a73e8" t="ደምበል የገበያ ማዕከል" />
    <Label x={1757} y={881} w={126} c="#5670c0" t="Tsedey Bank S" />
    <Label x={1712} y={899.500} w={166} c="#5670c0" t="Africa Avenue Bran" />
    <Label x={1857} y={605} w={50} s={15} c="#3f586d" t="ECA Rd" bold rot={88} />
    <Label x={0} y={894} w={63} s={17} c="#4c5f6d" t="minium" />
    <path id="akaki" d="M50,750 Q50,774 60,796" fill="none" />
    <text fontSize="17" fill="#12839b" stroke="#d9f4fa" strokeWidth="1" paintOrder="stroke" fontWeight="500"><textPath href="#akaki" textLength="45">Akaki</textPath></text>
    <path id="banty" d="M1753,591 Q1793,599 1817,627" fill="none" />
    <text fontSize="17" fill="#12839b" stroke="#d9f4fa" strokeWidth="1" paintOrder="stroke" fontWeight="500"><textPath href="#banty" textLength="74">Bantyketu</textPath></text>
    <text fontSize="17" fill="#12839b" fontWeight="500" transform="translate(1592 589) rotate(48)">tu</text>

    <Pin x={341} y={602} c="#a964f7">
      <path fillRule="evenodd" d="M-7,-3.500 H-.8 V-8.500 H2.500 V-6.500 H.8 V-3.500 H7 V-1 H5.500 V4 H7 V6 H-7 V4 H-5.500 V-1 H-7Z M-2.500,5.500 V2 Q0,-1.500 2.500,2 V5.500Z" fill="#fff" />
    </Pin>
    <Pin x={200.500} y={822} c="#f5434f">
      <path d="M-4.300,-6.500 V6.500 M4.300,-6.500 V6.500 M-4,0 H4" stroke="#fff" strokeWidth="3.200" />
    </Pin>
    <Pin x={1043.500} y={642} c="#fa4452">
      <path d="M-7,-5 H2 L4,-8 L6,-7 L5,-5 H7 V-2 H5 Q3,1 7,5 V7 H-7 V5 Q-3,1 -5,-2 H-7Z" fill="#fff" />
    </Pin>
    <Pin x={1221} y={589} c="#f944c9"><Bed /></Pin>
    <Pin x={1270.500} y={633} c="#758e9a"><circle r="5.500" fill="#fff" /></Pin>
    <Pin x={1035.500} y={770.500} c="#758e9a"><circle r="5.500" fill="#fff" /></Pin>
    <Pin x={1238} y={884} c="#f944c9"><Bed /></Pin>
    <Pin x={1666} y={652.500} c="#a964f7">
      <path d="M-5.500,-7.500 h2.500 v2 h1.700 v-2 h2.600 v2 h1.700 v-2 h2.500 V-3 L3.500,-1.500 Q3.500,2 6,5 H7 V7.500 H-7 V5 H-6 Q-3.500,2 -3.500,-1.500 L-5.500,-3Z" fill="#fff" />
    </Pin>
    <Pin x={1762.500} y={656} c="#f944c9"><Bed /></Pin>
    <Pin x={1868} y={825} c="#1a88f5">
      <path fillRule="evenodd" d="M-6,-3 H6 L7.500,7 H-7.500Z M-3,-3 Q0,-10 3,-3 H1.500 Q0,-7 -1.500,-3Z" fill="#fff" />
    </Pin>

    <g fontFamily="'Open Sans', sans-serif" fill="#808489" opacity=".6">
      <text x="1539" y="823" fontSize="24" textLength="196" lengthAdjust="spacingAndGlyphs">Activate Windows</text>
      <text x="1539" y="850" fontSize="17.500" textLength="283" lengthAdjust="spacingAndGlyphs">Go to Settings to activate Windows.</text>
    </g>
  </svg>
);

const Logo = () => (
  <svg viewBox="0 0 50 50" className="size-[50px]">
    <rect width="50" height="50" fill="#5b4a45" />
    <rect x="1.300" y="1.300" width="47.400" height="47.400" fill="#2a3143" />
    <ellipse cx="25" cy="25" rx="19.500" ry="20.500" fill="none" stroke="#ad8e69" strokeWidth="1.300" />
    <ellipse cx="25" cy="25" rx="17" ry="18" fill="none" stroke="#6e6255" strokeWidth="3.200" strokeDasharray="1.500 1" />
    <ellipse cx="25" cy="25" rx="14.500" ry="15.500" fill="#20283b" stroke="#83705a" strokeWidth=".8" />
    <path d="M16.200,33 V19 L17,15 L17.800,19 V33Z" fill="#dcc0a6" />
    <path d="M21.500,25 Q21,19 25.700,17.500 L26,15 L26.300,17.500 Q31,19 30.500,25Z" fill="#ecd8c7" />
    <path d="M15,35 V27 Q17,23 20,26 V24.500 H32 V26 Q35,23 37,27 V35Z" fill="#c7a58b" />
    <path d="M18.500,27 Q20.500,23.500 22.500,27Z M30,27 Q32,23.500 34.500,27Z" fill="#f0dfd0" />
    <path d="M14,35.500 H38 M18,35 V30 M22,35 V29 M26,35 V29 M30,35 V29 M34,35 V30" stroke="#6b4e40" strokeWidth="1.200" />
    <path d="M15,29 H37" stroke="#ead5c5" strokeWidth=".7" />
  </svg>
);

export default function App() {
  return (
    <div className="h-[902px] w-full overflow-hidden bg-white font-['Roboto',sans-serif]">
      <div className="flex h-[148px] items-start justify-between bg-[#1977cc] pr-[211px] pl-[174px] text-[19px] leading-7 font-medium text-white">
        <div className="flex gap-10 pt-[50px]">
          <span className="w-[146px] whitespace-nowrap">October 17, 2024</span>
          <span className="whitespace-nowrap">Rabīʿ al-thānī 13, 1446</span>
        </div>
        <div className="w-[679px] pt-[43px]">
          <div className="flex justify-between">
            {labels.map((l) => <span key={l}>{l}</span>)}
          </div>
          <div className="flex justify-between pr-[4px] pl-1">
            {times.map((t) => <span key={t}>{t}</span>)}
          </div>
        </div>
      </div>

      <header className="flex h-[100px] items-center justify-between pr-[176px] pb-[2px] pl-[167px]">
        <div className="flex items-center gap-3 pt-[1px]">
          <Logo />
          <h1 className="origin-left scale-x-[1.045] font-['Inter',sans-serif] text-[40px] leading-[50px] font-bold whitespace-nowrap text-[#2c4964]">Alif Mesjid</h1>
        </div>
        <nav className="flex items-center gap-11 font-['Liberation_Sans',sans-serif] text-[20.700px] text-[#2c4964]">
          {links.map((l) => <a key={l} className="whitespace-nowrap">{l}</a>)}
          <a className="flex h-[51px] w-[198px] items-center justify-center rounded-[25px] bg-[#1977cc] font-['Roboto',sans-serif] text-[19px] font-medium whitespace-nowrap text-white">Make Donation</a>
        </nav>
      </header>

      <section className="flex h-[338px] flex-col items-center pt-[80px] pr-[8px]">
        <h2 className="scale-x-[1.060] font-['Inter',sans-serif] text-[43px] leading-[54px] font-medium tracking-[0.5px] text-[#2c4964] [font-feature-settings:'cv11']">Contact</h2>
        <div className="mt-6 flex h-1 w-[220px] items-center justify-center bg-[linear-gradient(#bbb,#bbb)] bg-[length:100%_1px] bg-[position:0_2px] bg-no-repeat pr-[1px]">
          <div className="h-1 w-[83px] bg-[#1977cc]" />
        </div>
        <p className="mt-7 w-[1560px] text-center text-[21.970px] leading-[33px] text-[#444444]">
          For general enquiries, feedback or suggestions, you can reach us in person using the map or send us a message using the form and we will get back to you as
          <br />
          soon as possible.
        </p>
      </section>

      <div className="relative h-[316px] overflow-hidden">
        <CityMap />
        <div className="absolute top-[14px] left-0 flex h-9 w-[159px] items-center justify-center rounded-[2px] bg-white pr-[2px] text-[16.500px] text-[#1a73e8] shadow-[0_1px_4px_rgba(0,0,0,0.3)]">View larger map</div>
        <div className="absolute top-[301px] left-0 h-10 w-[54px] rounded-t-[2px] border-2 border-white bg-[#77756d] shadow">
          <svg viewBox="0 0 50 14" className="h-[14px] w-[50px]">
            <path d="M2,3 h5 M10,2 h3 M16,5 h6 M30,3 h4 M38,6 h7 M4,9 h6 M14,11 h5 M33,10 h6 M42,12 h5" stroke="#aaa391" strokeWidth="2" />
            <path d="M6,6 h4 M22,8 h8 M25,4 h4 M12,7 h3 M36,3 h3 M20,12 h5 M45,9 h4" stroke="#4a5146" strokeWidth="2.500" />
          </svg>
        </div>
        <div className="absolute top-[228px] left-[1815px] flex h-[110px] w-[55px] flex-col items-center rounded-[2px] bg-white shadow-[0_1px_4px_rgba(0,0,0,0.3)]">
          <svg viewBox="0 0 55 88" className="h-[88px] w-[55px]">
            <path d="M28,15 V40 M16,27.500 H41 M16,83 H41" stroke="#666666" strokeWidth="5" />
            <path d="M7,55.500 H48" stroke="#e6e6e6" strokeWidth="1" />
          </svg>
        </div>
      </div>
    </div>
  );
}
